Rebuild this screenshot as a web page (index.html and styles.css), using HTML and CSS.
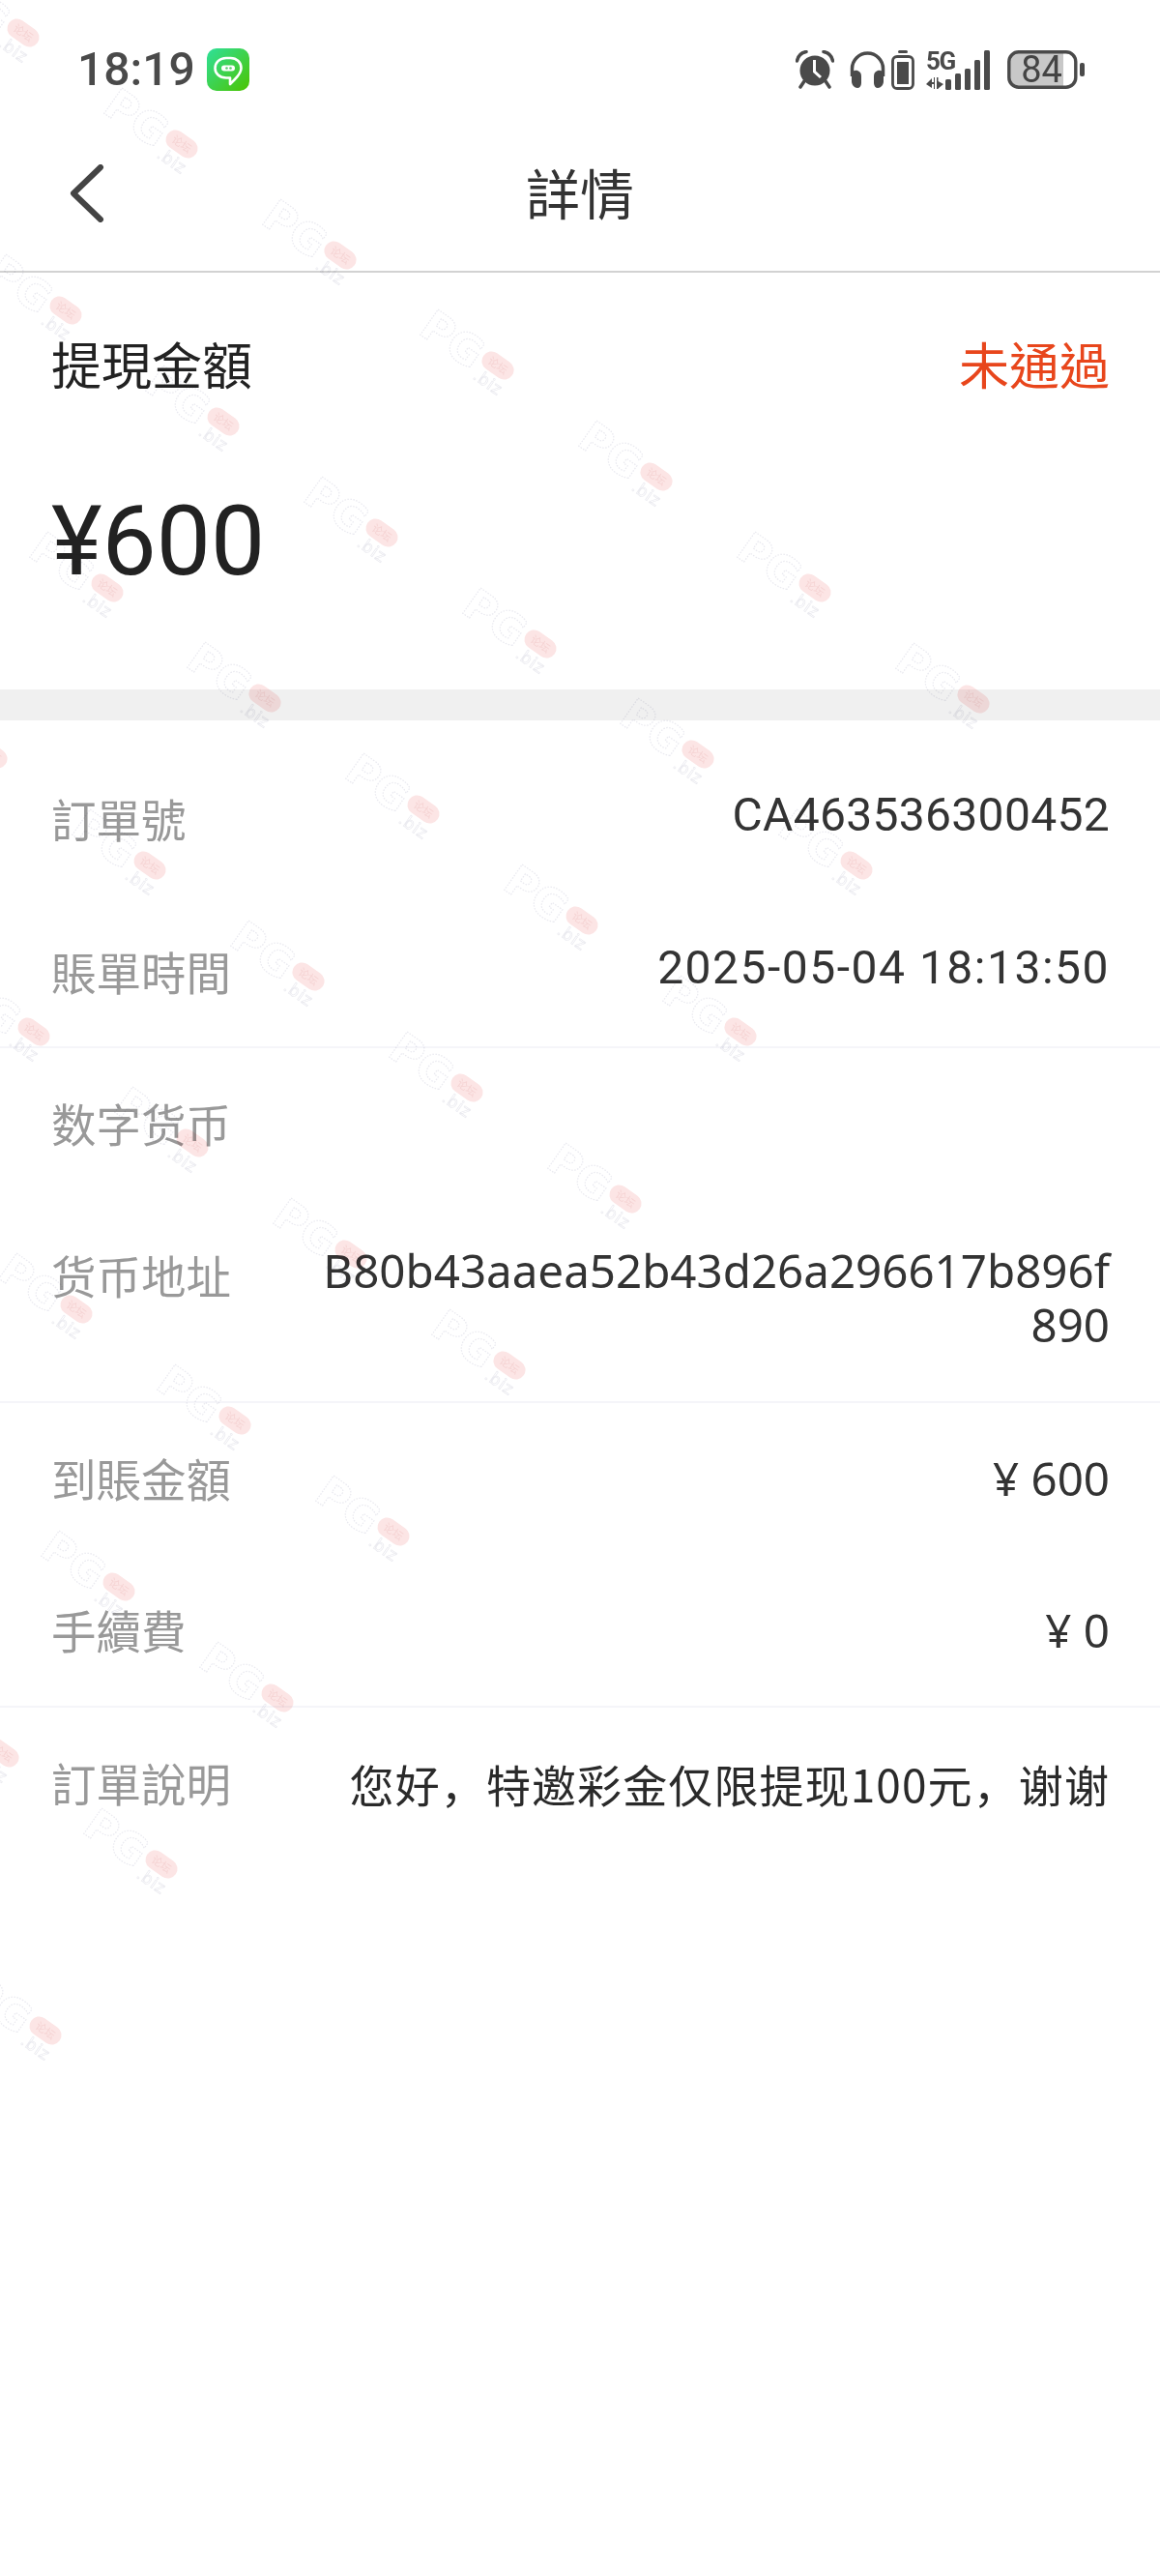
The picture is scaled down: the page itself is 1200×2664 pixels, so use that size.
FILE: index.html
```html
<!DOCTYPE html>
<html lang="zh-Hant">
<head>
<meta charset="utf-8">
<title>詳情</title>
<link rel="stylesheet" href="styles.css">
</head>
<body>
<div class="page">
  <div class="statusbar">
    <div class="status-left">
      <span class="clock">18:19</span>
      <svg class="app-icon" viewBox="0 0 44 44">
        <defs>
          <linearGradient id="appGrad" x1="0" y1="0" x2="1" y2="1">
            <stop offset="0" stop-color="#2fe09a"/>
            <stop offset="1" stop-color="#4cc400"/>
          </linearGradient>
        </defs>
        <rect width="44" height="44" rx="10" fill="url(#appGrad)"/>
        <path d="M24 30.500H20C13 30.500 8.500 26 8.500 20.500S13 10 20 10h4.500C31 10 35.500 14.500 35.500 20.500c0 5-3.500 8.500-7 12L24 37z" fill="none" stroke="#fff" stroke-width="2.600" stroke-linejoin="round"/>
        <rect x="15" y="17.500" width="14" height="6" rx="3" fill="#fff"/>
        <circle cx="20.500" cy="20.500" r="1.300" fill="#5ad070"/>
        <circle cx="24.500" cy="20.500" r="1.300" fill="#5ad070"/>
      </svg>
    </div>
    <div class="status-right">
      <svg class="ico-alarm" viewBox="0 0 40 40">
        <circle cx="20" cy="21" r="15.500" fill="#4a4a4a"/>
        <path d="M1.500 11 Q3 3 11 1.500" fill="none" stroke="#4a4a4a" stroke-width="3.500" stroke-linecap="round"/>
        <path d="M38.500 11 Q37 3 29 1.500" fill="none" stroke="#4a4a4a" stroke-width="3.500" stroke-linecap="round"/>
        <path d="M9 32 5 38M31 32l4 6" stroke="#4a4a4a" stroke-width="3.500" stroke-linecap="round"/>
        <path d="M19.500 10v12l6.500 6" fill="none" stroke="#fff" stroke-width="3"/>
      </svg>
      <svg class="ico-phones" viewBox="0 0 37 40">
        <path d="M2.500 27V19a16 16 0 0 1 32 0v8" fill="none" stroke="#4a4a4a" stroke-width="3.500"/>
        <path d="M2 25c0-3 3-5 6-4 3 1 4 3 4 6v7c0 3-2 5-4 5-3 0-6-3-6-7z" fill="#4a4a4a"/>
        <path d="M35 25c0-3-3-5-6-4-3 1-4 3-4 6v7c0 3 2 5 4 5 3 0 6-3 6-7z" fill="#4a4a4a"/>
      </svg>
      <svg class="ico-cell" viewBox="0 0 24 41">
        <rect x="7" y="0" width="10" height="3" rx="1.500" fill="#4a4a4a"/>
        <rect x="1.500" y="6.500" width="21" height="33" rx="4.500" fill="none" stroke="#4a4a4a" stroke-width="2.800"/>
        <rect x="6" y="12" width="12" height="23" fill="#4a4a4a"/>
      </svg>
      <div class="net">
        <span class="net-label">5G</span>
        <svg class="ico-net" viewBox="0 0 68 41">
          <path d="M0 35l6-6v4h2v-5h1v12H8v-5H6v4z" fill="#4a4a4a"/>
          <path d="M11 28h1.500v4l5.500 3-5.500 4.500V40H11z" fill="#4a4a4a"/>
          <rect x="20" y="30" width="6" height="11" rx="1.500" fill="#4a4a4a"/>
          <rect x="30" y="24" width="6" height="17" rx="1.500" fill="#4a4a4a"/>
          <rect x="40" y="19" width="6" height="22" rx="1.500" fill="#4a4a4a"/>
          <rect x="50" y="10" width="6" height="31" rx="1.500" fill="#4a4a4a"/>
          <rect x="60" y="0" width="6" height="41" rx="1.500" fill="#4a4a4a"/>
        </svg>
      </div>
      <div class="battery">
        <svg class="ico-battery" viewBox="0 0 80 40">
          <path d="M10 3h48v34H10a8 8 0 0 1-8-8V11a8 8 0 0 1 8-8z" fill="#c8c8c8"/>
          <rect x="1.800" y="1.800" width="69" height="36.400" rx="10" fill="none" stroke="#4a4a4a" stroke-width="3.400"/>
          <rect x="75" y="13" width="5" height="14" rx="2" fill="#4a4a4a"/>
        </svg>
        <span class="battery-label">84</span>
      </div>
    </div>
  </div>

  <header class="navbar">
    <svg class="back" viewBox="0 0 36 60">
      <path d="M32 3 4 30l28 27" fill="none" stroke="#444" stroke-width="6" stroke-linecap="round" stroke-linejoin="round"/>
    </svg>
    <h1 class="nav-title">詳情</h1>
  </header>

  <section class="summary">
    <div class="summary-head">
      <span class="summary-label">提現金額</span>
      <span class="summary-status">未通過</span>
    </div>
    <div class="summary-amount">¥600</div>
  </section>

  <div class="band"></div>

  <section class="group group-first">
    <div class="row"><span class="label">訂單號</span><span class="value value-din">CA463536300452</span></div>
    <div class="row"><span class="label">賬單時間</span><span class="value value-din value-date">2025-05-04 18:13:50</span></div>
  </section>
  <section class="group group-crypto">
    <div class="row"><span class="label">数字货币</span><span class="value"></span></div>
    <div class="row"><span class="label">货币地址</span><span class="value value-break">B80b43aaea52b43d26a296617b896f890</span></div>
  </section>
  <section class="group group-money">
    <div class="row"><span class="label">到賬金額</span><span class="value value-money">¥ 600</span></div>
    <div class="row"><span class="label">手續費</span><span class="value value-money">¥ 0</span></div>
  </section>
  <section class="group group-note">
    <div class="row"><span class="label">訂單說明</span><span class="value value-note" lang="zh-Hans">您好&#xFF0C;特邀彩金仅限提现100元&#xFF0C;谢谢</span></div>
  </section>

  <!-- Repeating site stamp laid across the page -->
  <svg class="stamps" viewBox="0 0 1200 2664">
    <defs>
      <g id="stamp" transform="rotate(35)">
        <text class="stamp-pg" x="-88" y="20">PG</text>
        <rect class="stamp-pill" x="-18" y="-10" width="36" height="20" rx="10"/>
        <text class="stamp-cn" x="0" y="4" text-anchor="middle">论坛</text>
        <text class="stamp-biz" x="-14" y="26">.biz</text>
      </g>
    </defs>
    <use href="#stamp" x="24" y="34"/><use href="#stamp" x="188" y="149"/><use href="#stamp" x="352" y="264"/><use href="#stamp" x="515" y="378"/><use href="#stamp" x="679" y="493"/><use href="#stamp" x="843" y="608"/><use href="#stamp" x="1007" y="723"/>
    <use href="#stamp" x="68" y="321"/><use href="#stamp" x="231" y="436"/><use href="#stamp" x="395" y="551"/><use href="#stamp" x="559" y="666"/><use href="#stamp" x="722" y="780"/><use href="#stamp" x="886" y="895"/>
    <use href="#stamp" x="111" y="608"/><use href="#stamp" x="274" y="722"/><use href="#stamp" x="438" y="837"/><use href="#stamp" x="602" y="952"/><use href="#stamp" x="766" y="1067"/>
    <use href="#stamp" x="-9" y="780"/><use href="#stamp" x="155" y="895"/><use href="#stamp" x="319" y="1010"/><use href="#stamp" x="483" y="1125"/><use href="#stamp" x="647" y="1240"/>
    <use href="#stamp" x="35" y="1067"/><use href="#stamp" x="199" y="1182"/><use href="#stamp" x="363" y="1297"/><use href="#stamp" x="527" y="1412"/>
    <use href="#stamp" x="79" y="1354"/><use href="#stamp" x="243" y="1469"/><use href="#stamp" x="407" y="1584"/>
    <use href="#stamp" x="123" y="1641"/><use href="#stamp" x="287" y="1756"/>
    <use href="#stamp" x="3" y="1813"/><use href="#stamp" x="167" y="1928"/>
    <use href="#stamp" x="47" y="2100"/>
  </svg>
</div>
</body>
</html>
```
FILE: styles.css
```css
* { box-sizing: border-box; }

html, body {
  margin: 0;
  background: #fff;
}

.page {
  position: relative;
  width: 1200px;
  height: 2664px;
  overflow: hidden;
  background: #fff;
  font-family: "Noto Sans CJK SC", "Noto Sans CJK TC", "Noto Sans", sans-serif;
}

/* status bar */
.statusbar {
  height: 110px;
  padding: 50px 78px 0 80px;
  display: flex;
  justify-content: space-between;
  align-items: flex-start;
}
.status-left {
  display: flex;
  align-items: center;
  gap: 12px;
  height: 44px;
}
.clock {
  font-family: Roboto, sans-serif;
  font-size: 48px;
  font-weight: 500;
  color: #4a4a4a;
  line-height: 44px;
}
.app-icon { width: 44px; height: 44px; display: block; }

.status-right {
  display: flex;
  align-items: flex-start;
  margin-top: 2px;
}
.status-right svg { display: block; flex: none; }
.ico-alarm { width: 40px; height: 40px; margin-right: 16px; }
.ico-phones { width: 37px; height: 40px; margin-right: 6px; }
.ico-cell { width: 24px; height: 41px; margin-right: 12px; }
.net {
  position: relative;
  width: 68px;
  height: 41px;
  margin-right: 16px;
}
.ico-net { width: 68px; height: 41px; }
.net-label {
  position: absolute;
  left: 0;
  top: 0;
  font-family: Roboto, sans-serif;
  font-weight: 700;
  font-size: 26px;
  line-height: 22px;
  letter-spacing: -1.500px;
  color: #4a4a4a;
}
.battery {
  position: relative;
  width: 80px;
  height: 40px;
}
.ico-battery { width: 80px; height: 40px; }
.battery-label {
  position: absolute;
  left: 0;
  top: 0;
  width: 71px;
  text-align: center;
  font-family: Roboto, sans-serif;
  font-size: 38px;
  line-height: 40px;
  color: #444;
}

/* navigation */
.navbar {
  position: relative;
  height: 172px;
  padding-left: 72px;
  display: flex;
  align-items: center;
  border-bottom: 2px solid #d2d2d2;
}
.back { width: 36px; height: 60px; display: block; margin-top: 10px; }
.nav-title {
  position: absolute;
  left: 0;
  right: 0;
  top: 56px;
  margin: 0;
  text-align: center;
  font-size: 56px;
  font-weight: 400;
  line-height: 64px;
  color: #333;
}

/* withdrawal summary */
.summary {
  height: 431px;
  padding: 62px 52px 0 53px;
}
.summary-head {
  display: flex;
  justify-content: space-between;
  align-items: center;
  height: 64px;
  font-size: 52px;
  line-height: 64px;
}
.summary-label { color: #222; }
.summary-status { color: #e8461c; }
.summary-amount {
  margin-top: 92px;
  font-family: Roboto, sans-serif;
  font-size: 100px;
  line-height: 120px;
  letter-spacing: 0;
  color: #222;
}

.band {
  height: 32px;
  background: #f0f0f0;
}

/* detail rows */
.group {
  border-bottom: 2px solid #f5f5f9;
}
.group:last-of-type { border-bottom: 0; }
.group-first { padding: 24px 0 2px; }
.group-money { padding-bottom: 4px; }

.row {
  display: flex;
  justify-content: space-between;
  align-items: flex-start;
  padding: 45px 52px 51px 53px;
}
.row + .row { margin-top: 5px; }

.label {
  flex: none;
  font-size: 46.500px;
  line-height: 56px;
  margin: 4px 0 -4px;
  color: #999;
}
.value {
  font-family: "Noto Sans", "Noto Sans CJK SC", sans-serif;
  font-size: 47.500px;
  line-height: 56px;
  text-align: right;
  color: #333;
}
.value-din {
  font-family: Roboto, sans-serif;
  font-size: 48px;
  letter-spacing: 0.300px;
  margin-top: 1px;
}
.value-date { letter-spacing: 1.500px; }
.value-break {
  max-width: 820px;
  word-break: break-all;
}
.value-money { margin: 5px 0 -5px; }
.value-note {
  font-family: "Noto Sans CJK SC", sans-serif;
  font-size: 46px;
  letter-spacing: 1.100px;
  color: #2a2a2a;
  margin: 5px 0 -5px;
}

/* site stamp */
.stamps {
  position: absolute;
  left: 0;
  top: 0;
  width: 1200px;
  height: 2664px;
  pointer-events: none;
  mix-blend-mode: multiply;
}
.stamp-pg {
  font-family: "DejaVu Sans", sans-serif;
  font-weight: 700;
  font-size: 44px;
  fill: none;
  stroke: #eaeaf0;
  stroke-width: 1.200;
  stroke-dasharray: 1.500 1.500;
}
.stamp-pill { fill: #fce5e5; }
.stamp-cn {
  font-size: 11px;
  fill: #f5d3d3;
}
.stamp-biz {
  font-family: Roboto, sans-serif;
  font-size: 18px;
  letter-spacing: 1px;
  fill: none;
  stroke: #ebebf0;
  stroke-width: 0.700;
}
```
